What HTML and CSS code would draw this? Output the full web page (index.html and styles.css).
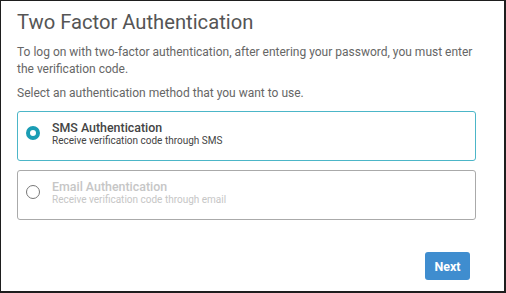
FILE: index.html
```html
<!DOCTYPE html>
<html lang="en">
<head>
<meta charset="utf-8">
<title>Two Factor Authentication</title>
<link rel="stylesheet" href="styles.css">
</head>
<body>
<div class="frame">
  <h1 class="title">Two Factor Authentication</h1>
  <p class="intro">To log on with two-factor authentication, after entering your password, you must enter the verification code.</p>
  <p class="select">Select an authentication method that you want to use.</p>
  <div class="options">
    <div class="option option-selected">
      <span class="radio radio-on"></span>
      <div class="option-text">
        <div class="option-title">SMS Authentication</div>
        <div class="option-sub">Receive verification code through SMS</div>
      </div>
    </div>
    <div class="option option-disabled">
      <span class="radio radio-off"></span>
      <div class="option-text">
        <div class="option-title">Email Authentication</div>
        <div class="option-sub">Receive verification code through email</div>
      </div>
    </div>
  </div>
  <div class="actions">
    <button class="btn-next">Next</button>
  </div>
</div>
</body>
</html>
```
FILE: styles.css
```css
html, body {
  margin: 0;
  padding: 0;
  background: #fff;
}
.frame {
  box-sizing: border-box;
  width: 506px;
  height: 293px;
  border: 1px solid #1e1e1e;
  border-right-width: 2px;
  border-bottom-width: 2px;
  padding: 0 28px 0 16px;
  font-family: Roboto, "Liberation Sans", sans-serif;
  display: flex;
  flex-direction: column;
}
.title {
  margin: 9px 0 0;
  font-size: 20.2px;
  line-height: 24px;
  font-weight: 400;
  color: #555;
}
.intro, .select {
  margin: 10px 0 0;
  font-size: 12px;
  line-height: 17px;
  color: #666;
}
.select {
  margin-top: 7px;
}
.options {
  margin-top: 9px;
  display: flex;
  flex-direction: column;
  gap: 9px;
}
.option {
  box-sizing: border-box;
  height: 50px;
  border: 1px solid #aaa;
  border-radius: 3px;
  display: flex;
  align-items: flex-start;
  padding: 14px 0 0 8px;
}
.option-selected {
  border-color: #4cb6c8;
}
.radio {
  box-sizing: border-box;
  width: 14px;
  height: 14px;
  border-radius: 50%;
  flex: none;
}
.radio-on {
  border: 4.5px solid #1a9db4;
  background: #fff;
}
.radio-off {
  border: 1.5px solid #777;
}
.option-text {
  margin-left: 12px;
  margin-top: -5px;
}
.option-title {
  font-size: 12.4px;
  line-height: 14px;
  font-weight: 500;
  color: #444;
}
.option-sub {
  font-size: 10px;
  line-height: 11px;
  color: #444;
}
.option-disabled .option-title,
.option-disabled .option-sub {
  color: #c6c6c6;
}
.actions {
  margin-top: 32px;
  display: flex;
  justify-content: flex-end;
  padding-right: 6px;
}
.btn-next {
  width: 45px;
  height: 28px;
  border: none;
  border-radius: 3px;
  background: #3f8dcf;
  color: #fff;
  font-family: Roboto, "Liberation Sans", sans-serif;
  font-size: 12.5px;
  font-weight: 700;
  padding: 0;
}
```
